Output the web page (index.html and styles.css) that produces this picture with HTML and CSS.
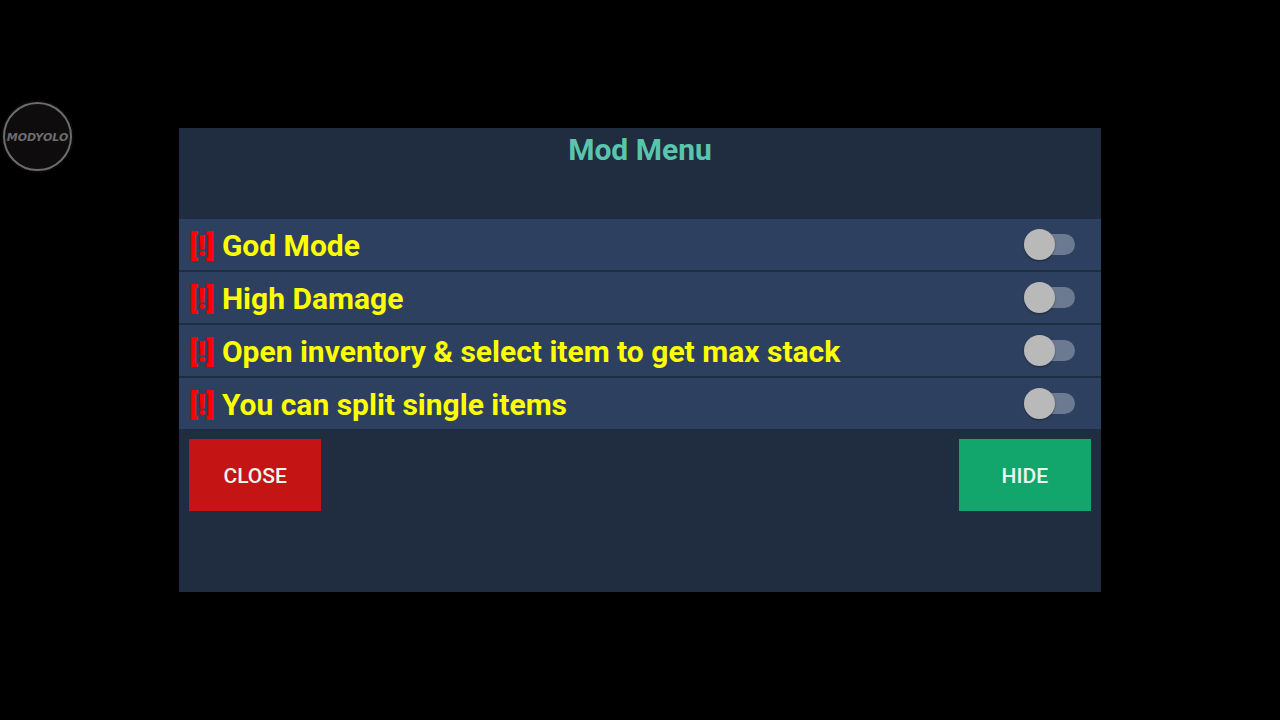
FILE: index.html
```html
<!DOCTYPE html>
<html lang="en">
<head>
    <meta charset="UTF-8">
    <meta name="viewport" content="width=device-width, initial-scale=1.0">
    <title>Mod Menu</title>
    <link rel="stylesheet" href="styles.css">
</head>
<body>
    <button class="launcher" type="button">MODYOLO</button>

    <main class="menu">
        <h1 class="menu-title">Mod Menu</h1>

        <div class="options">
            <label class="option">
                <span class="option-text"><span class="mark">[!]</span> God Mode</span>
                <input class="switch" type="checkbox">
            </label>
            <label class="option">
                <span class="option-text"><span class="mark">[!]</span> High Damage</span>
                <input class="switch" type="checkbox">
            </label>
            <label class="option">
                <span class="option-text"><span class="mark">[!]</span> Open inventory &amp; select item to get max stack</span>
                <input class="switch" type="checkbox">
            </label>
            <label class="option">
                <span class="option-text"><span class="mark">[!]</span> You can split single items</span>
                <input class="switch" type="checkbox">
            </label>
        </div>

        <div class="actions">
            <button class="btn btn-close" type="button">CLOSE</button>
            <button class="btn btn-hide" type="button">HIDE</button>
        </div>
    </main>
</body>
</html>
```
FILE: styles.css
```css
* {
  box-sizing: border-box;
}

body {
  display: flex;
  align-items: center;
  justify-content: center;
  min-height: 100vh;
  margin: 0;
  font-family: Roboto, sans-serif;
  background-color: #000;
}

.launcher {
  position: absolute;
  top: 102px;
  left: 3px;
  display: flex;
  align-items: center;
  justify-content: center;
  width: 69px;
  height: 69px;
  padding: 2px 0 0;
  border: 2px solid #6c6c6c;
  border-radius: 50%;
  font: italic bold 11px "DejaVu Sans", sans-serif;
  color: #6c6c6c;
  background-color: #0f0c0e;
  box-shadow: 0 0 0 2px #0a0809;
}

.menu {
  width: 72%;
  padding-bottom: 81px;
  background-color: #202c3f;
}

.menu-title {
  height: 91px;
  margin: 0;
  padding-top: 4px;
  font-size: 30px;
  font-weight: 700;
  line-height: 36px;
  text-align: center;
  color: #58c5ac;
}

.options {
  display: grid;
  gap: 2px;
}

.option {
  display: flex;
  align-items: center;
  justify-content: space-between;
  height: 51px;
  padding: 0 26px 0 10px;
  background-color: #2d4060;
}

.option-text {
  padding-top: 2px;
  font-size: 30px;
  font-weight: 700;
  line-height: 36px;
  color: #ff0;
}

.mark {
  font-weight: 900;
  color: #f00;
}

.switch {
  appearance: none;
  display: flex;
  align-items: center;
  width: 51px;
  height: 21px;
  margin: 0;
  border-radius: 12px;
  background-color: #6c7a91;
}

.switch::before {
  content: "";
  width: 31px;
  height: 31px;
  border-radius: 50%;
  background-color: #b9b9b9;
  box-shadow: 0 1px 2px rgba(0, 0, 0, 0.4);
}

.switch:checked {
  justify-content: flex-end;
}

.actions {
  display: flex;
  justify-content: space-between;
  padding: 10px 10px 0;
}

.btn {
  width: 132px;
  height: 72px;
  padding: 2px 0 0;
  border: 0;
  font: 500 21px Roboto, sans-serif;
  color: #eaf5f0;
}

.btn-close {
  background-color: #c51414;
}

.btn-hide {
  background-color: #12a66c;
}
```
